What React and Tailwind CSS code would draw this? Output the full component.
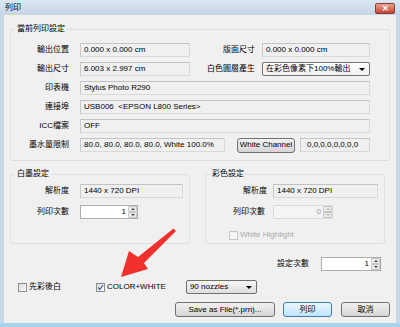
import React from 'react';

const font = { fontFamily: '"Liberation Sans", "Noto Sans CJK TC", sans-serif' };

function Field({ w, children, className = '' }) {
  return (
    <div className={`h-[14px] ${w} border border-[#d9d9d9] border-t-[#c2c2c2] border-l-[#cacaca] bg-[#f0f0f0] flex items-center pl-[3px] whitespace-nowrap overflow-hidden ${className}`}>
      {children}
    </div>
  );
}

function Label({ w, children }) {
  return <div className={`${w} text-right whitespace-nowrap shrink-0`}>{children}</div>;
}

function Spin({ w, value, disabled }) {
  return (
    <div className={`h-[14px] ${w} flex border ${disabled ? 'border-[#d9d9d9] bg-[#f4f4f4]' : 'border-[#abadb3] bg-white'}`}>
      <div className={`flex-1 text-right pr-[2px] leading-[12px] ${disabled ? 'text-[#9a9a9a]' : 'text-black'}`}>{value}</div>
      <div className="w-[9px] flex flex-col">
        <div className="flex-1 flex items-center justify-center border border-[#c5c5c5] bg-[#ececec] rounded-[1px]">
          <div className={`w-0 h-0 border-l-[2px] border-r-[2px] border-b-[2px] border-l-transparent border-r-transparent ${disabled ? 'border-b-[#b5b5b5]' : 'border-b-[#404040]'}`} />
        </div>
        <div className="flex-1 flex items-center justify-center border border-[#c5c5c5] bg-[#ececec] rounded-[1px]">
          <div className={`w-0 h-0 border-l-[2px] border-r-[2px] border-t-[2px] border-l-transparent border-r-transparent ${disabled ? 'border-t-[#b5b5b5]' : 'border-t-[#404040]'}`} />
        </div>
      </div>
    </div>
  );
}

function Combo({ w, children, className = '' }) {
  return (
    <div className={`h-[14px] ${w} flex items-center border border-[#707070] rounded-[2px] bg-gradient-to-b from-[#f6f6f6] to-[#dedede] pl-[3px] pr-[4px] ${className}`}>
      <span className="flex-1 whitespace-nowrap overflow-hidden">{children}</span>
      <div className="w-0 h-0 border-l-[3px] border-r-[3px] border-t-[3px] border-l-transparent border-r-transparent border-t-black" />
    </div>
  );
}

function Button({ w, children, primary }) {
  return (
    <div className={`h-[15px] ${w} flex items-center justify-center rounded-[3px] border whitespace-nowrap ${primary ? 'border-[#3c7fb1] bg-gradient-to-b from-[#eaf6fd] to-[#bee6fd]' : 'border-[#707070] bg-gradient-to-b from-[#f2f2f2] to-[#d5d5d5]'}`}>
      {children}
    </div>
  );
}

function Check({ checked, disabled }) {
  return (
    <div className={`w-[9px] h-[9px] border flex items-center justify-center ${disabled ? 'border-[#c6c6c6] bg-[#f4f4f4]' : 'border-[#8e8f8f] bg-gradient-to-br from-[#dcdcdc] to-[#fbfbfb]'}`}>
      {checked && (
        <svg width="7" height="7" viewBox="0 0 7 7">
          <path d="M1 3.5 L2.8 5.5 L6 1" stroke="#4a5f97" strokeWidth="1.2" fill="none" />
        </svg>
      )}
    </div>
  );
}

export default function App() {
  return (
    <div className="w-[400px] h-[327px] relative bg-[#c9d8e8] flex flex-col text-[8px] text-black overflow-hidden" style={font}>
      {/* title bar */}
      <div className="h-[15px] shrink-0 flex items-start justify-between pl-[5px] pr-[5px] bg-gradient-to-b from-[#dbe6f2] to-[#c6d6e7]">
        <span className="text-[8px] leading-[8px] mt-[4px]">列印</span>
        <div className="w-[20px] h-[11px] mt-[3px] rounded-[2px] border border-[#8b3a3a] bg-gradient-to-b from-[#e8a493] to-[#c3422f] flex items-center justify-center">
          <span className="text-white text-[8px] leading-[8px] font-bold">✕</span>
        </div>
      </div>

      {/* body */}
      <div className="mx-[4px] h-[308px] bg-[#f0f0f0] px-[6px] pt-[8px] flex flex-col">
        <fieldset className="border border-[#dcdfe2] rounded-[3px] h-[138px] w-[380px] px-0 pb-0">
          <legend className="ml-[4px] px-[2px] leading-[12px]">當前列印設定</legend>
          <div className="flex flex-col gap-[5px] mt-[8px]">
            <div className="flex items-center h-[14px]">
              <Label w="w-[58px]">輸出位置</Label>
              <Field w="w-[110px]" className="ml-[11px]">0.000 x 0.000 cm</Field>
              <Label w="w-[65px]">版面尺寸</Label>
              <Field w="w-[108px]" className="ml-[7px]">0.000 x 0.000 cm</Field>
            </div>
            <div className="flex items-center h-[14px]">
              <Label w="w-[58px]">輸出尺寸</Label>
              <Field w="w-[110px]" className="ml-[11px]">6.003 x 2.997 cm</Field>
              <Label w="w-[65px]">白色圖層產生</Label>
              <Combo w="w-[108px]" className="ml-[7px] !from-white !to-[#f0f0f0]">在彩色像素下100%輸出</Combo>
            </div>
            <div className="flex items-center h-[14px]">
              <Label w="w-[58px]">印表機</Label>
              <Field w="w-[290px]" className="ml-[11px]">Stylus Photo R290</Field>
            </div>
            <div className="flex items-center h-[14px]">
              <Label w="w-[58px]">連接埠</Label>
              <Field w="w-[290px]" className="ml-[11px]">USB006&nbsp;&nbsp;&lt;EPSON L800 Series&gt;</Field>
            </div>
            <div className="flex items-center h-[14px]">
              <Label w="w-[58px]">ICC檔案</Label>
              <Field w="w-[290px]" className="ml-[11px]">OFF</Field>
            </div>
            <div className="flex items-center h-[14px]">
              <Label w="w-[58px]">墨水量限制</Label>
              <Field w="w-[145px]" className="ml-[11px]">80.0, 80.0, 80.0, 80.0, White 100.0%</Field>
              <div className="ml-[12px]"><Button w="w-[58px]">White Channel</Button></div>
              <Field w="w-[70px]" className="ml-[5px] pl-[6px]">0,0,0,0,0,0,0,0</Field>
            </div>
          </div>
        </fieldset>

        <div className="flex mt-[7px]">
          <fieldset className="border border-[#dcdfe2] rounded-[3px] h-[76px] w-[180px] px-0 pb-0">
            <legend className="ml-[4px] px-[2px] leading-[12px]">白墨設定</legend>
            <div className="flex items-center h-[14px] mt-[4px]">
              <Label w="w-[58px]">解析度</Label>
              <Field w="w-[103px]" className="ml-[11px]">1440 x 720 DPI</Field>
            </div>
            <div className="flex items-center h-[14px] mt-[7px]">
              <Label w="w-[58px]">列印次數</Label>
              <div className="ml-[11px]"><Spin w="w-[58px]" value="1" /></div>
            </div>
          </fieldset>
          <fieldset className="border border-[#dcdfe2] rounded-[3px] h-[76px] w-[180px] ml-[15px] px-0 pb-0">
            <legend className="ml-[4px] px-[2px] leading-[12px]">彩色設定</legend>
            <div className="flex items-center h-[14px] mt-[4px]">
              <Label w="w-[61px]">解析度</Label>
              <Field w="w-[105px]" className="ml-[6px]">1440 x 720 DPI</Field>
            </div>
            <div className="flex items-center h-[14px] mt-[7px]">
              <Label w="w-[59px]">列印次數</Label>
              <div className="ml-[8px]"><Spin w="w-[60px]" value="0" disabled /></div>
            </div>
            <div className="flex items-center gap-[2px] ml-[23px] mt-[10px] text-[#a8a8a8]">
              <Check disabled />
              <span>White Highlight</span>
            </div>
          </fieldset>
        </div>

        <div className="flex items-center justify-end h-[14px] mt-[13px] pr-[9px]">
          <span>設定次數</span>
          <div className="ml-[12px]"><Spin w="w-[60px]" value="1" /></div>
        </div>

        <div className="flex items-center h-[14px] mt-[9px]">
          <div className="flex items-center gap-[2px] ml-[8px]">
            <Check />
            <span>先彩後白</span>
          </div>
          <div className="flex items-center gap-[2px] ml-[35px]">
            <Check checked />
            <span>COLOR+WHITE</span>
          </div>
          <Combo w="w-[71px]" className="ml-[20px]">90 nozzles</Combo>
        </div>

        <div className="flex items-center justify-end mt-[8px]">
          <Button w="w-[100px]">Save as File(*.prn)...</Button>
          <div className="ml-[8px]"><Button w="w-[49px]" primary>列印</Button></div>
          <div className="ml-[9px]"><Button w="w-[49px]">取消</Button></div>
        </div>
      </div>

      <div className="flex-1 bg-[#a6d2ea]" />

      {/* red annotation arrow */}
      <svg className="absolute left-0 top-0 pointer-events-none" width="400" height="327" viewBox="0 0 400 327">
        <path d="M173.5 228.5 L176 231 L144 263 L148 269 L121 277 L129 251 L138 257 Z" fill="#f0302c" />
      </svg>
    </div>
  );
}
